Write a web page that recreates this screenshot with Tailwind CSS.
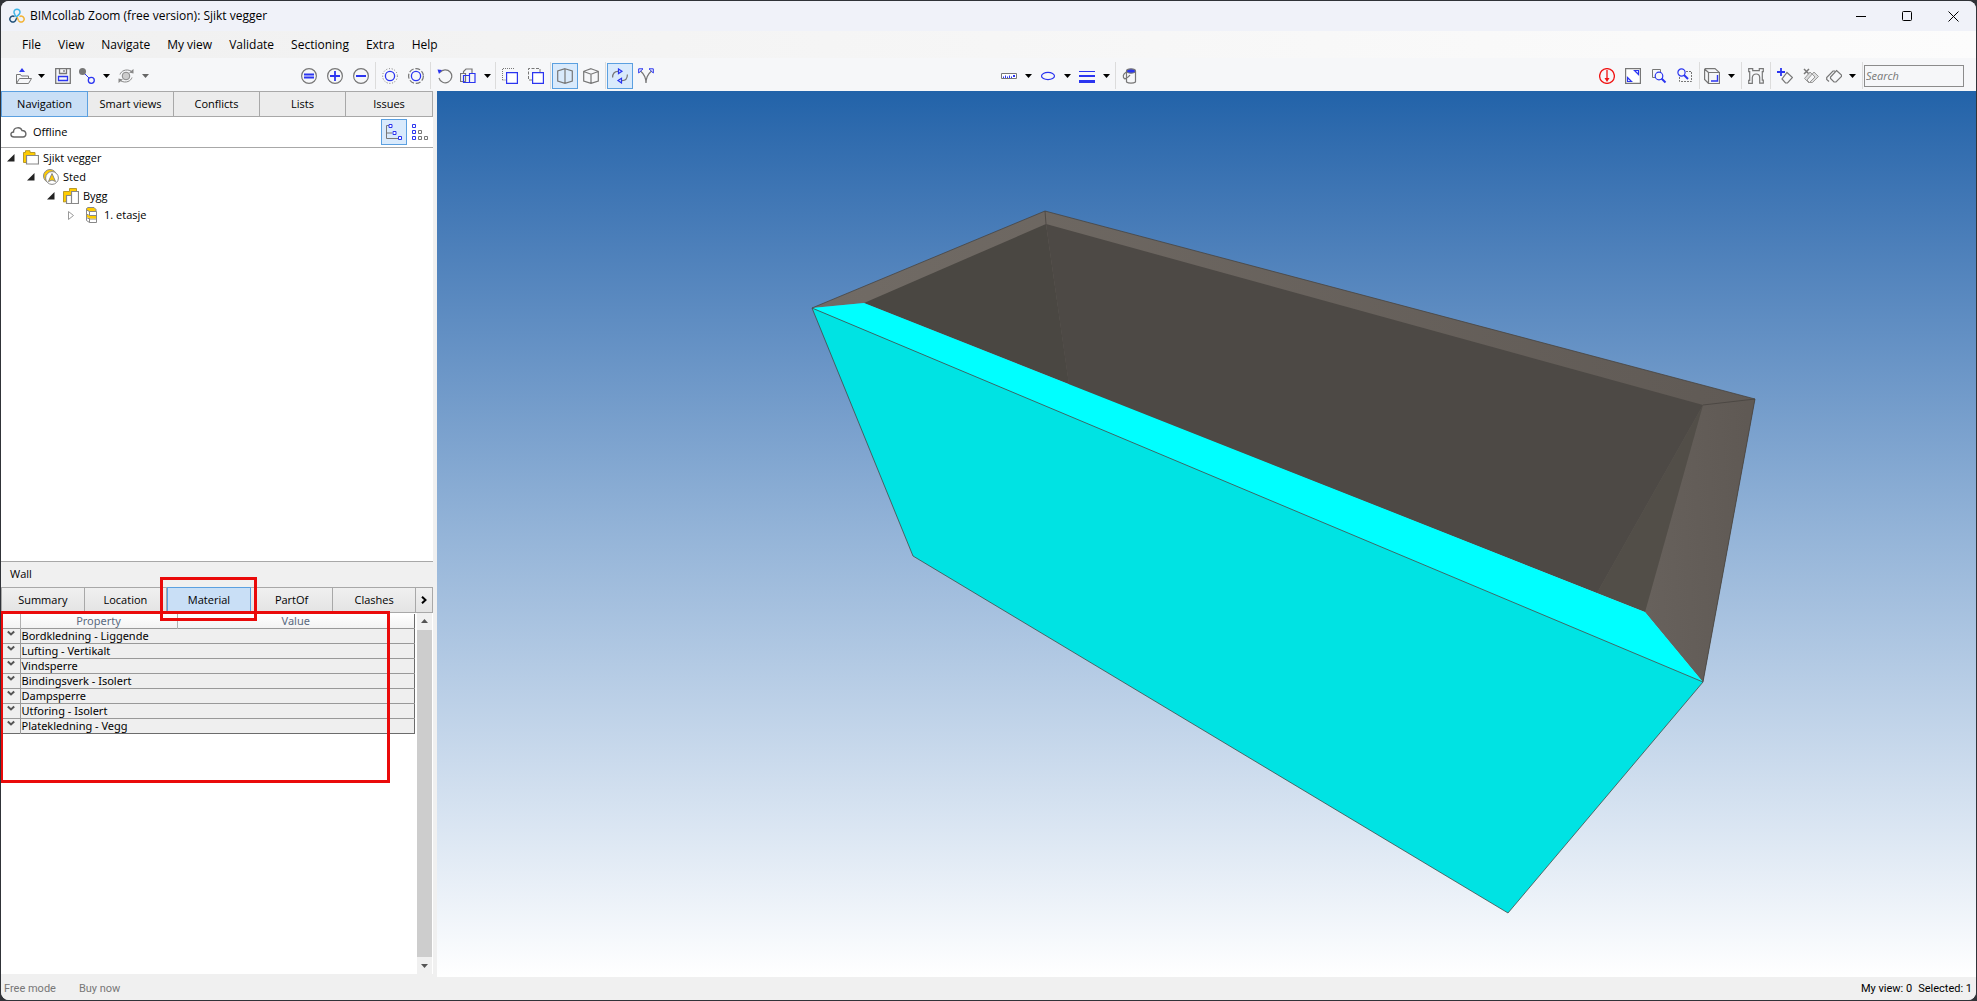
<!DOCTYPE html>
<html lang="en">
<head>
<meta charset="utf-8">
<title>BIMcollab Zoom (free version): Sjikt vegger</title>
<script src="https://cdn.jsdelivr.net/npm/@tailwindcss/browser@4"></script>
</head>
<body class="h-screen bg-[#303338] font-['Open_Sans',sans-serif] text-[12px] leading-4 text-black">
<svg class="hidden">
  <symbol id="caret" viewBox="0 0 7 4"><path d="M0 0h7L3.500 4z" fill="currentColor"/></symbol>
  <symbol id="open-node" viewBox="0 0 8 8"><path d="M7.500 0v7.500H0z" fill="#222"/></symbol>
</svg>
<div class="relative flex h-full flex-col overflow-hidden p-px">
<div class="flex min-h-0 flex-1 flex-col overflow-hidden rounded-lg bg-[#f0f0f0]">

  <header class="flex h-[30px] shrink-0 items-center bg-[#f0f2f9] pl-2">
    <svg class="size-4" viewBox="0 0 16 16" fill="none" stroke-width="1.500">
      <path d="M6 6.400A3 3 0 1 1 10 6.400L8 8.500" stroke="#3db4e6"/>
      <path d="M5.500 8.600A3 3 0 1 0 6.500 12.500L8 9.500" stroke="#1d4f78"/>
      <path d="M5.500 6.500L8 9.500" stroke="#3db4e6"/>
      <path d="M9.500 12.500A3 3 0 1 0 10.500 8.600" stroke="#f2b233"/><path d="M8 9l1.500 3.500" stroke="#f2b233"/>
    </svg>
    <h1 class="ml-[5px]">BIMcollab Zoom (free version): Sjikt vegger</h1>
    <div class="ml-auto flex">
      <button class="flex h-[30px] w-[46px] items-center justify-center" aria-label="Minimize"><svg class="size-[11px]" viewBox="0 0 11 11"><path d="M0 5.500h10" stroke="#000"/></svg></button>
      <button class="flex h-[30px] w-[46px] items-center justify-center" aria-label="Maximize"><svg class="size-[11px]" viewBox="0 0 11 11"><rect x=".5" y=".5" width="9" height="9" rx="1" fill="none" stroke="#000"/></svg></button>
      <button class="flex h-[30px] w-[46px] items-center justify-center" aria-label="Close"><svg class="size-[11px]" viewBox="0 0 11 11"><path d="M.5.500l10 10m0-10l-10 10" stroke="#000"/></svg></button>
    </div>
  </header>

  <nav class="flex h-[27px] shrink-0 items-center gap-[17px] bg-linear-to-r from-[#f0f0f0] to-[#fcfcfc] pl-[21px]">
    <a href="#">File</a><a href="#">View</a><a href="#">Navigate</a><a href="#">My view</a><a href="#">Validate</a><a href="#">Sectioning</a><a href="#">Extra</a><a href="#">Help</a>
  </nav>

  <div class="flex h-[33px] shrink-0 items-center bg-[#f6f7f9] pt-0.5 pl-[10px]">
    <button class="flex h-[26px] w-[39px] items-center gap-[6px] pl-[5px]" aria-label="Open"><svg class="size-4 shrink-0" viewBox="0 0 16 16" fill="none" stroke="#777"><path d="M6 0l3 4H3z" fill="#2b35f0" stroke="none"/><path d="M.5 15.500V6.500h4l1 1.500h7v2M.5 15.500l3-5h12l-3 5z"/></svg><svg class="h-1 w-[7px]"><use href="#caret"/></svg></button>
    <button class="flex size-[26px] items-center justify-center" aria-label="Save"><svg class="size-4" viewBox="0 0 16 16" fill="none" stroke="#777"><path d="M.7.700h14.600v14.600H.700zM4.500 1v4.500h7V1M9 2v2" stroke-width="1.300"/><path d="M3.500 8.500h9v4h-9z" stroke="#2b35f0" stroke-width="1.300"/></svg></button>
    <button class="flex h-[26px] w-[38px] items-center gap-[8px] pl-[3px]" aria-label="Link"><svg class="size-4 shrink-0" viewBox="0 0 16 16" fill="none"><circle cx="3.500" cy="3.500" r="3.500" fill="#777"/><path d="M6 6l4 4" stroke="#2b35f0"/><circle cx="12.300" cy="12.300" r="3" stroke="#2b35f0" stroke-width="1.300"/></svg><svg class="h-1 w-[7px] shrink-0"><use href="#caret"/></svg></button>
    <button class="flex h-[26px] w-[39px] items-center gap-[8px] pl-[4px] text-[#666]" aria-label="Refresh"><svg class="size-4 shrink-0" viewBox="0 0 16 16" fill="none" stroke="#888"><circle cx="8" cy="8" r="3.800" fill="#ccc"/><path d="M2 6.500C3 3 8 .5 13 3M14 9.500c-1 3.500-6 6-11 3.500"/><path d="M15.500 1v4.500l-4.500-1zM.5 15v-4.500l4.500 1z" fill="#888" stroke="none"/></svg><svg class="h-1 w-[7px] shrink-0"><use href="#caret"/></svg></button>

    <div class="ml-[143px] flex items-center">
      <button class="flex size-[26px] items-center justify-center" aria-label="Show only"><svg class="size-4" viewBox="0 0 16 16" fill="none"><circle cx="8" cy="8" r="7.400" stroke="#777" stroke-width="1.200"/><path d="M3 6.500h10M3 9.500h10" stroke="#2b35f0" stroke-width="1.800"/></svg></button>
      <button class="flex size-[26px] items-center justify-center" aria-label="Add"><svg class="size-4" viewBox="0 0 16 16" fill="none"><circle cx="8" cy="8" r="7.400" stroke="#777" stroke-width="1.200"/><path d="M3 8h10M8 3v10" stroke="#2b35f0" stroke-width="1.800"/></svg></button>
      <button class="flex size-[26px] items-center justify-center" aria-label="Remove"><svg class="size-4" viewBox="0 0 16 16" fill="none"><circle cx="8" cy="8" r="7.400" stroke="#777" stroke-width="1.200"/><path d="M3 8h10" stroke="#2b35f0" stroke-width="1.800"/></svg></button>
      <i class="mx-px h-[27px] w-px bg-[#dcdcdc]"></i>
      <button class="flex size-[26px] items-center justify-center" aria-label="Isolate"><svg class="size-4" viewBox="0 0 16 16" fill="none"><circle cx="8" cy="8" r="7.400" stroke="#777" stroke-dasharray="1 1.800"/><circle cx="8" cy="8" r="4.600" stroke="#2b35f0" stroke-width="1.300"/></svg></button>
      <button class="flex size-[26px] items-center justify-center" aria-label="Isolate group"><svg class="size-4" viewBox="0 0 16 16" fill="none"><circle cx="8" cy="8" r="7.400" stroke="#777" stroke-width="1.200" stroke-dasharray="5 1.800"/><circle cx="8" cy="8" r="4.600" stroke="#2b35f0" stroke-width="1.300"/></svg></button>
      <i class="mx-px h-[27px] w-px bg-[#dcdcdc]"></i>
      <button class="flex size-[26px] items-center justify-center" aria-label="Undo"><svg class="size-4" viewBox="0 0 16 16" fill="none"><path d="M3 4.500A6.500 6.500 0 1 1 2 10" stroke="#777" stroke-width="1.200"/><path d="M.5 1.500l4.500.5L2 6z" fill="#2b35f0"/></svg></button>
      <button class="flex h-[26px] w-[36px] items-center gap-[8px] pl-[2px]" aria-label="Components"><svg class="size-4 shrink-0" viewBox="0 0 16 16" fill="none" stroke="#777" stroke-width="1.200"><path d="M3.500 5V3.500L6 1h6v4M.5 5.500h5v8h-5z"/><path d="M3.500 7.500h6v7h-6zM9.500 5.500h5.500v9H9.500z" stroke="#2b35f0"/></svg><svg class="h-1 w-[7px] shrink-0"><use href="#caret"/></svg></button>
      <i class="mx-px h-[27px] w-px bg-[#dcdcdc]"></i>
      <button class="flex size-[26px] items-center justify-center" aria-label="Select"><svg class="size-4" viewBox="0 0 16 16" fill="none"><path d="M.5 12V.500H12" stroke="#777" stroke-dasharray="1 1"/><path d="M.5 12H4" stroke="#777" stroke-dasharray="1 1"/><path d="M4.600 4.600h10.800v10.800H4.600z" fill="#fff" stroke="#2b35f0" stroke-width="1.200"/></svg></button>
      <button class="flex size-[26px] items-center justify-center" aria-label="Select next"><svg class="size-4" viewBox="0 0 16 16" fill="none"><path d="M4 12H.500V.500H12V4" stroke="#777" stroke-dasharray="3 1.500"/><path d="M4.600 4.600h10.800v10.800H4.600z" fill="#fff" stroke="#2b35f0" stroke-width="1.200"/></svg></button>
      <i class="mx-px h-[27px] w-px bg-[#dcdcdc]"></i>
      <button class="flex size-[26px] items-center justify-center border border-[#5ba0e0] bg-[#d9eafc]" aria-label="Perspective"><svg class="size-4" viewBox="0 0 16 16" fill="none" stroke="#777" stroke-width="1.200"><path d="M8 .7l7.300 2.300v10L8 15.300.7 13V3zM8 .7v14.600"/></svg></button>
      <button class="flex size-[26px] items-center justify-center" aria-label="Isometric"><svg class="size-4" viewBox="0 0 16 16" fill="none" stroke="#777" stroke-width="1.200"><path d="M8 .7l7.300 2.600V13L8 15.400.7 13V3.300zM.7 3.500L8 6.200l7.300-2.700M8 6.200v9"/></svg></button>
      <i class="mx-px h-[27px] w-px bg-[#dcdcdc]"></i>
      <button class="flex size-[26px] items-center justify-center border border-[#5ba0e0] bg-[#d9eafc]" aria-label="Orbit"><svg class="size-4" viewBox="0 0 16 16" fill="none"><path d="M.6 9.500C.6 5.500 3 3.400 6 3.400M15.400 6.500c0 4-2.400 6.100-5.400 6.100" stroke="#777" stroke-width="1.200"/><path d="M6.500.9L10 3.200 6.500 5.600zM9.500 10.300L6 12.600 9.500 15z" stroke="#2b35f0" stroke-width="1.200"/></svg></button>
      <button class="flex size-[26px] items-center justify-center" aria-label="Walk"><svg class="size-4" viewBox="0 0 16 16" fill="none"><path d="M2.500 3C6 6 8 10 8 15c0-5 2-9 5.500-12" stroke="#777" stroke-width="1.300"/><path d="M.7 5V.8H5zM15.300 5V.800H11z" stroke="#2b35f0"/></svg></button>
    </div>

    <div class="ml-[337px] flex items-center">
      <button class="flex h-[26px] w-[39px] items-center gap-[8px] pl-[5px]" aria-label="Measure"><svg class="size-4 shrink-0" viewBox="0 0 16 16" fill="none"><path d="M.5 5.500h15v5H.500z" stroke="#777" fill="#fff"/><path d="M2.500 10V8.500M4.500 10V7.500M6.500 10V8.500M8.500 10V7.500M10.500 10V8.500" stroke="#2b35f0"/><path d="M12 7h2v2h-2z" fill="#2b35f0"/></svg><svg class="h-1 w-[7px] shrink-0"><use href="#caret"/></svg></button>
      <button class="flex h-[26px] w-[39px] items-center gap-[8px] pl-[5px]" aria-label="Ellipse"><svg class="size-4 shrink-0" viewBox="0 0 16 16" fill="none"><ellipse cx="8" cy="8" rx="6.500" ry="3.600" stroke="#2b35f0" stroke-width="1.200"/></svg><svg class="h-1 w-[7px] shrink-0"><use href="#caret"/></svg></button>
      <button class="flex h-[26px] w-[40px] items-center gap-[8px] pl-[5px]" aria-label="Line weight"><svg class="size-4 shrink-0" viewBox="0 0 16 16" fill="#2b35f0"><path d="M0 3h16v1H0zM0 7h16v2H0zM0 12h16v3H0z"/></svg><svg class="h-1 w-[7px] shrink-0"><use href="#caret"/></svg></button>
      <i class="mx-px h-[27px] w-px bg-[#dcdcdc]"></i>
      <button class="flex size-[26px] items-center justify-center" aria-label="Fill"><svg class="size-4" viewBox="0 0 16 16" fill="none" stroke="#777" stroke-width="1.200"><path d="M4.500 3v11c2 1.600 7 1.600 9 0V3"/><ellipse cx="9" cy="3" rx="4.500" ry="2.200" fill="#2b35f0"/><path d="M4.500 4C1 6 0 9 3 11c2-1 4-2 5-4"/></svg></button>
    </div>

    <div class="mr-3 ml-auto flex items-center">
      <button class="flex size-[26px] items-center justify-center" aria-label="Section"><svg class="size-4" viewBox="0 0 16 16" fill="none" stroke="#f01414"><circle cx="8" cy="8" r="7.400" stroke-width="1.300"/><path d="M8 2v9" stroke-width="1.300"/><path d="M5.500 10h5L8 14z" fill="#f01414" stroke="none"/></svg></button>
      <button class="flex size-[26px] items-center justify-center" aria-label="Zoom extents"><svg class="size-4" viewBox="0 0 16 16" fill="none"><path d="M.6.600h14.800v14.800H.600z" fill="#fff" stroke="#777" stroke-width="1.200"/><path d="M9.500 2.500h4v4zM2.500 9.500v4h4z" stroke="#2b35f0" stroke-width="1.200"/></svg></button>
      <button class="flex size-[26px] items-center justify-center" aria-label="Zoom selection"><svg class="size-4" viewBox="0 0 16 16" fill="none"><path d="M4 9.500H1.500v-8h8V4" stroke="#777"/><circle cx="8" cy="8" r="3.800" stroke="#2b35f0" stroke-width="1.200"/><path d="M10.500 10.500l4 4" stroke="#2b35f0" stroke-width="2"/></svg></button>
      <button class="flex size-[26px] items-center justify-center" aria-label="Zoom window"><svg class="size-4" viewBox="0 0 16 16" fill="none"><path d="M9 3.500h5.500v10h-12V9" stroke="#777" stroke-dasharray="2 1"/><circle cx="4.500" cy="4.500" r="3.600" stroke="#2b35f0" stroke-width="1.200"/><path d="M7 7l4 4" stroke="#2b35f0" stroke-width="2"/></svg></button>
      <i class="mx-px h-[27px] w-px bg-[#dcdcdc]"></i>
      <button class="flex h-[26px] w-[39px] items-center gap-[8px] pl-[3px]" aria-label="View cube"><svg class="size-4 shrink-0" viewBox="0 0 16 16" fill="none" stroke="#777" stroke-width="1.200"><path d="M4.500 4.500h11v11h-11zM4.500 4.500l-4-3.500M.6 1v10.500l4 4M.6.600H11l4.500 4"/><path d="M13.500 7v6H7" stroke="#2b35f0" stroke-width="1.400"/></svg><svg class="h-1 w-[7px] shrink-0"><use href="#caret"/></svg></button>
      <i class="mx-px h-[27px] w-px bg-[#dcdcdc]"></i>
      <button class="flex size-[26px] items-center justify-center" aria-label="Clipping"><svg class="size-4" viewBox="0 0 16 16" fill="none" stroke="#777" stroke-width="1.200"><path d="M.7.700h4v2h6.600v-2h4v3h-1v8.500h1v3h-3.600V9.500C11.500 4.800 5 4.800 4.300 9.500v5.800H.7v-3h1V3.700h-1z"/></svg></button>
      <i class="mx-px h-[27px] w-px bg-[#dcdcdc]"></i>
      <button class="flex size-[26px] items-center justify-center" aria-label="Add section"><svg class="size-4" viewBox="0 0 16 16" fill="none"><path d="M4 0v8M0 4h8" stroke="#2b35f0" stroke-width="1.800"/><path d="M10 4.500l5.500 5-5 5.500H8.500L5 11z" stroke="#777" stroke-width="1.200"/></svg></button>
      <button class="flex size-[26px] items-center justify-center" aria-label="Delete section"><svg class="size-4" viewBox="0 0 16 16" fill="none" stroke="#999"><path d="M1 1l5 5M6 1L1 6" stroke="#777" stroke-width="1.500"/><path d="M7 4l-5.500 6.500L6 15l6-6zM11 4l4.500 4.500-6 6H6.500L4 12z" fill="#ccc" fill-opacity=".6"/></svg></button>
      <button class="flex h-[26px] w-[37px] items-center gap-[7px] pl-[2px]" aria-label="Sections"><svg class="size-4 shrink-0" viewBox="0 0 16 16" fill="none" stroke="#777" stroke-width="1.200"><path d="M9 3H7L.7 9.500v2L3 13.500M10.500 2.500l5 4.500v1.500L10 14H8L4.500 10.500v-1.500z"/></svg><svg class="h-1 w-[7px] shrink-0"><use href="#caret"/></svg></button>
      <i class="mx-px h-[27px] w-px bg-[#dcdcdc]"></i>
      <input type="text" aria-label="Search" placeholder="Search" class="h-[22px] w-[100px] border border-[#8c8c8c] bg-[#f6f7f9] px-px text-[11px] italic placeholder:text-[#777]">
    </div>
  </div>

  <main class="flex min-h-0 flex-1">
    <aside class="relative mr-1 flex w-[432px] shrink-0 flex-col text-[11px]">
      <div class="grid h-[26px] shrink-0 grid-cols-5 border border-[#a8a8a8] bg-[#ececec]">
        <button class="-my-px -ml-px border border-[#5ba0e0] bg-[#c9dff6]">Navigation</button>
        <button class="border-r border-[#a8a8a8]">Smart views</button>
        <button class="border-r border-[#a8a8a8]">Conflicts</button>
        <button class="border-r border-[#a8a8a8]">Lists</button>
        <button>Issues</button>
      </div>
      <div class="flex h-[31px] shrink-0 items-center border-b border-[#a8a8a8] bg-white pl-[9px]">
        <svg class="h-4 w-[17px]" viewBox="0 0 17 16" fill="none" stroke="#666" stroke-width="1.400"><path d="M4 13C0 13 0 8 3.500 8 3.500 3 10.500 2.500 12 6.500c5 0 5 6.500 1 6.500z"/></svg>
        <span class="ml-[6px]">Offline</span>
        <button class="ml-auto flex size-[26px] items-center justify-center border border-[#5ba0e0] bg-[#d9eafc]" aria-label="Tree view"><svg class="size-4" viewBox="0 0 16 16" fill="none"><path d="M3 1.500H.500v13H12M.5 9H6" stroke="#777"/><path d="M3 .5h3v3H3zM7 7.500h3v3H7zM12.500 12.500h3v3h-3z" fill="#fff" stroke="#2b35f0"/></svg></button>
        <button class="flex size-[26px] items-center justify-center" aria-label="List view"><svg class="size-4" viewBox="0 0 16 16" fill="none" stroke="#2b35f0"><path d="M.5.500h3v3h-3zM.5 6.500h3v3h-3zM.5 12.500h3v3h-3z"/><path d="M6.500 6.500h3v3h-3zM6.500 12.500h3v3h-3zM12.500 12.500h3v3h-3z" stroke="#777"/></svg></button>
      </div>
      <ul class="min-h-0 flex-[412] bg-white">
        <li class="flex h-[19px] items-center pt-px pl-[6px]"><svg class="size-2"><use href="#open-node"/></svg><svg class="ml-2 size-4" viewBox="0 0 16 16" stroke="#888"><path d="M.5 12.500v-10h2V.700h4.500v1.800h5v10z" fill="#fc0" stroke="#b99a2a"/><path d="M3.500 5.500h12v8.500h-12z" fill="#fff" stroke-width="1.200"/></svg><span class="ml-[4px]">Sjikt vegger</span></li>
        <li class="flex h-[19px] items-center pt-px pl-[26px]"><svg class="size-2"><use href="#open-node"/></svg><svg class="ml-2 size-4" viewBox="0 0 16 16" stroke="#888"><circle cx="7" cy="7" r="6.500" fill="#fc0"/><circle cx="9" cy="9" r="6.400" fill="#fff"/><path d="M9 4.500l3.500 8L9 11l-3.500 1.500z" fill="#fc0"/></svg><span class="ml-[4px]">Sted</span></li>
        <li class="flex h-[19px] items-center pt-px pl-[46px]"><svg class="size-2"><use href="#open-node"/></svg><svg class="ml-2 size-4" viewBox="0 0 16 16" stroke="#888"><path d="M.5 14V3.500h6v-3h7V12z" fill="#fc0" stroke="#b99a2a"/><path d="M3.500 7.500h5v8h-5zM8.500 3.500h7v12h-7z" fill="#fff" stroke-width="1.200"/></svg><span class="ml-[4px]">Bygg</span></li>
        <li class="flex h-[19px] items-center pt-px pl-[67px]"><svg class="h-[9px] w-[7px]" viewBox="0 0 7 9"><path d="M.5.500v8l5-4z" fill="#fff" stroke="#999"/></svg><svg class="ml-2 size-4" viewBox="0 0 16 16" stroke="#888"><path d="M3.500 13V1.500L5 .500h6l2 2v4H6z" fill="#fc0"/><path d="M3.500 3l3 1.500h7v11h-7l-3-2z" fill="#fff"/><path d="M6.500 4.500v11M3.500 7l3 1.500h7M3.500 10.500l3 1.500h7" fill="none"/><path d="M4 7.500l3 1.500h6v2.500H7L4 10z" fill="#fc0" stroke="none"/></svg><span class="ml-[5px]">1. etasje</span></li>
      </ul>
      <h2 class="h-[26px] shrink-0 border-t border-[#a8a8a8] pt-[4px] pl-[9px]">Wall</h2>
      <div class="flex h-[26px] shrink-0 border border-[#a8a8a8] bg-linear-to-b from-[#f0f0f0] to-[#e4e4e4]">
        <button class="flex-1 border-r border-[#a8a8a8]">Summary</button>
        <button class="flex-1 border-r border-[#a8a8a8]">Location</button>
        <button class="-my-px flex-1 border border-[#5ba0e0] bg-[#c9dff6]">Material</button>
        <button class="flex-1 border-r border-[#a8a8a8]">PartOf</button>
        <button class="flex-1 border-r border-[#a8a8a8]">Clashes</button>
        <button class="flex w-4 items-center justify-center" aria-label="More tabs"><svg class="size-2" viewBox="0 0 8 8"><path d="M2 .7l3.500 3.300L2 7.300" fill="none" stroke="#000" stroke-width="2"/></svg></button>
      </div>
      <div class="flex min-h-0 flex-[361] bg-white">
        <div class="min-w-0 flex-1 px-[2px] pt-px">
          <table class="w-full table-fixed border-collapse border-r border-b border-[#6c6c6c] font-['Noto_Sans',sans-serif] text-[11px] leading-[14px]">
            <colgroup><col class="w-[17px]"><col class="w-[157px]"><col></colgroup>
            <thead><tr class="h-[15px] bg-linear-to-b from-white to-[#f2f2f2] text-[#5a6a80]"><th class="p-0"></th><th class="border-x border-[#b0b0b0] p-0 font-normal">Property</th><th class="p-0 font-normal">Value</th></tr></thead>
            <tbody class="bg-[#efefef]">
              <tr class="h-[15px] border-t border-[#999]"><td class="border-r border-[#999] p-0"><svg class="mx-auto -mt-1 size-2" viewBox="0 0 8 8"><path d="M.8 1.500l3.200 3 3.200-3" fill="none" stroke="#555" stroke-width="2"/></svg></td><td class="p-0 pl-px" colspan="2">Bordkledning - Liggende</td></tr>
              <tr class="h-[15px] border-t border-[#999]"><td class="border-r border-[#999] p-0"><svg class="mx-auto -mt-1 size-2" viewBox="0 0 8 8"><path d="M.8 1.500l3.200 3 3.200-3" fill="none" stroke="#555" stroke-width="2"/></svg></td><td class="p-0 pl-px" colspan="2">Lufting - Vertikalt</td></tr>
              <tr class="h-[15px] border-t border-[#999]"><td class="border-r border-[#999] p-0"><svg class="mx-auto -mt-1 size-2" viewBox="0 0 8 8"><path d="M.8 1.500l3.200 3 3.200-3" fill="none" stroke="#555" stroke-width="2"/></svg></td><td class="p-0 pl-px" colspan="2">Vindsperre</td></tr>
              <tr class="h-[15px] border-t border-[#999]"><td class="border-r border-[#999] p-0"><svg class="mx-auto -mt-1 size-2" viewBox="0 0 8 8"><path d="M.8 1.500l3.200 3 3.200-3" fill="none" stroke="#555" stroke-width="2"/></svg></td><td class="p-0 pl-px" colspan="2">Bindingsverk - Isolert</td></tr>
              <tr class="h-[15px] border-t border-[#999]"><td class="border-r border-[#999] p-0"><svg class="mx-auto -mt-1 size-2" viewBox="0 0 8 8"><path d="M.8 1.500l3.200 3 3.200-3" fill="none" stroke="#555" stroke-width="2"/></svg></td><td class="p-0 pl-px" colspan="2">Dampsperre</td></tr>
              <tr class="h-[15px] border-t border-[#999]"><td class="border-r border-[#999] p-0"><svg class="mx-auto -mt-1 size-2" viewBox="0 0 8 8"><path d="M.8 1.500l3.200 3 3.200-3" fill="none" stroke="#555" stroke-width="2"/></svg></td><td class="p-0 pl-px" colspan="2">Utforing - Isolert</td></tr>
              <tr class="h-[15px] border-t border-[#999]"><td class="border-r border-[#999] p-0"><svg class="mx-auto -mt-1 size-2" viewBox="0 0 8 8"><path d="M.8 1.500l3.200 3 3.200-3" fill="none" stroke="#555" stroke-width="2"/></svg></td><td class="p-0 pl-px" colspan="2">Platekledning - Vegg</td></tr>
            </tbody>
          </table>
        </div>
        <div class="mr-px flex w-[15px] flex-col bg-[#cdcdcd] text-[#555]">
          <div class="flex h-[17px] items-center justify-center bg-[#f0f0f0]"><svg class="h-1 w-[7px] rotate-180"><use href="#caret"/></svg></div>
          <div class="mt-auto flex h-[17px] items-center justify-center bg-[#f0f0f0]"><svg class="h-1 w-[7px]"><use href="#caret"/></svg></div>
        </div>
      </div>
      <div class="h-[3px] shrink-0"></div>
      <div class="pointer-events-none absolute bottom-[356px] left-[159px] h-11 w-[97px] border-3 border-[#ea0a0a]"></div>
      <div class="pointer-events-none absolute bottom-[194px] -left-px h-[172px] w-[390px] border-3 border-[#ea0a0a]"></div>
    </aside>

    <section class="min-w-0 flex-1 bg-linear-to-b from-[#2263a9] via-[#94b4d8] to-white" aria-label="3D view">
      <svg class="size-full" viewBox="437 91 1539 886" stroke-linejoin="round">
        <defs>
          <linearGradient id="rim" x1="0" x2="1"><stop offset="0" stop-color="#716b65"/><stop offset="1" stop-color="#605a55"/></linearGradient>
          <linearGradient id="side" x1="0" x2="1" y1="0.600" y2="0.400"><stop offset="0" stop-color="#67615c"/><stop offset="1" stop-color="#5f5954"/></linearGradient>
        </defs>
        <path d="M812 308L1045 211 1755 399 1703 682 1645 612 864 303z" fill="url(#rim)"/>
        <path d="M1703 405L1755 399 1703 682 1645 612z" fill="url(#side)"/>
        <path d="M864 303L1046 224 1069 384z" fill="#4a4742"/>
        <path d="M1046 224L1703 405 1597 593 1069 385z" fill="#4d4945"/>
        <path d="M1703 405L1645 612 1597 593z" fill="#524e48"/>
        <path d="M812 308L864 303 1645 612 1703 682z" fill="#0ff"/>
        <path d="M812 308L1703 682 1508 913 913 556z" fill="#00e3e3"/>
        <path d="M812 308L1045 211 1755 399 1703 682 1508 913 913 556zL1703 682M1045 211l1 13M1703 405l52-6" fill="none" stroke="#45423e" stroke-opacity=".75"/>
      </svg>
    </section>
  </main>

  <footer class="flex h-[23px] shrink-0 items-center bg-[#f0f0f0] pr-1 pl-[3px] font-[Roboto,sans-serif] text-[11px]">
    <span class="text-[#777]">Free mode</span>
    <a href="#" class="ml-[23px] text-[#777]">Buy now</a>
    <span class="ml-auto">My view: 0</span><span class="ml-[6px]">Selected: 1</span>
  </footer>
</div>
</div>
</body>
</html>
